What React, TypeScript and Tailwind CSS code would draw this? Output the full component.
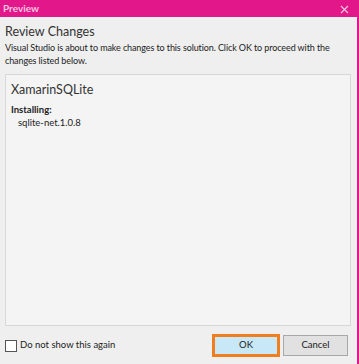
export default function App() {
  return (
    <div
      className="flex h-[364px] w-[359px] flex-col border-r-2 border-[#e2178a] bg-[#efefef] text-[#222]"
      style={{ fontFamily: 'Lato, "Noto Sans", sans-serif' }}
    >
      <div className="flex h-[17px] shrink-0 items-center justify-between bg-[#e2178a] pl-[3px] pr-[8px]">
        <span className="text-[10px] font-bold text-[#f6c4e0]">Preview</span>
        <svg width="9" height="9" viewBox="0 0 9 9" className="mt-[2px]">
          <path d="M1 1L8 8M8 1L1 8" stroke="#f6c4e0" strokeWidth="1.2" />
        </svg>
      </div>

      <div className="flex flex-1 flex-col px-[5px] pt-[7px]">
        <h1 className="text-[12.5px] leading-[15px] text-[#333]">Review Changes</h1>
        <p className="mt-[2px] whitespace-nowrap text-[9px] leading-[13px] tracking-[-0.1px] text-[#222]">
          Visual Studio is about to make changes to this solution. Click OK to proceed with the
          <br />
          changes listed below.
        </p>

        <div className="mt-[7px] h-[252px] w-[346px] shrink-0 border border-[#d8d8d8] bg-[#f4f4f4] px-[5px] pt-[7px]">
          <div className="text-[12.5px] leading-[16px] text-[#333]">XamarinSQLite</div>
          <div className="mt-[6px] text-[9.5px] font-bold leading-[12px]">Installing:</div>
          <div className="pl-[7px] text-[9.5px] leading-[13px]">sqlite-net.1.0.8</div>
        </div>

        <div className="mt-auto mb-[7px] flex items-center">
          <div className="flex items-center gap-[3px]">
            <span className="h-[12px] w-[12px] border border-[#555] bg-white" />
            <span className="text-[9.5px] text-[#222]">Do not show this again</span>
          </div>
          <div className="ml-auto flex items-center gap-[3px] pr-[4px]">
            <button className="flex h-[23px] w-[68px] items-center justify-center border-[3px] border-[#f07d1e] bg-[#c8e8f8] text-[9.5px] text-[#222]">
              OK
            </button>
            <button className="flex h-[21px] w-[65px] items-center justify-center border border-[#a8a8a8] bg-[#e1e1e1] text-[9.5px] text-[#222]">
              Cancel
            </button>
          </div>
        </div>
      </div>
    </div>
  )
}
